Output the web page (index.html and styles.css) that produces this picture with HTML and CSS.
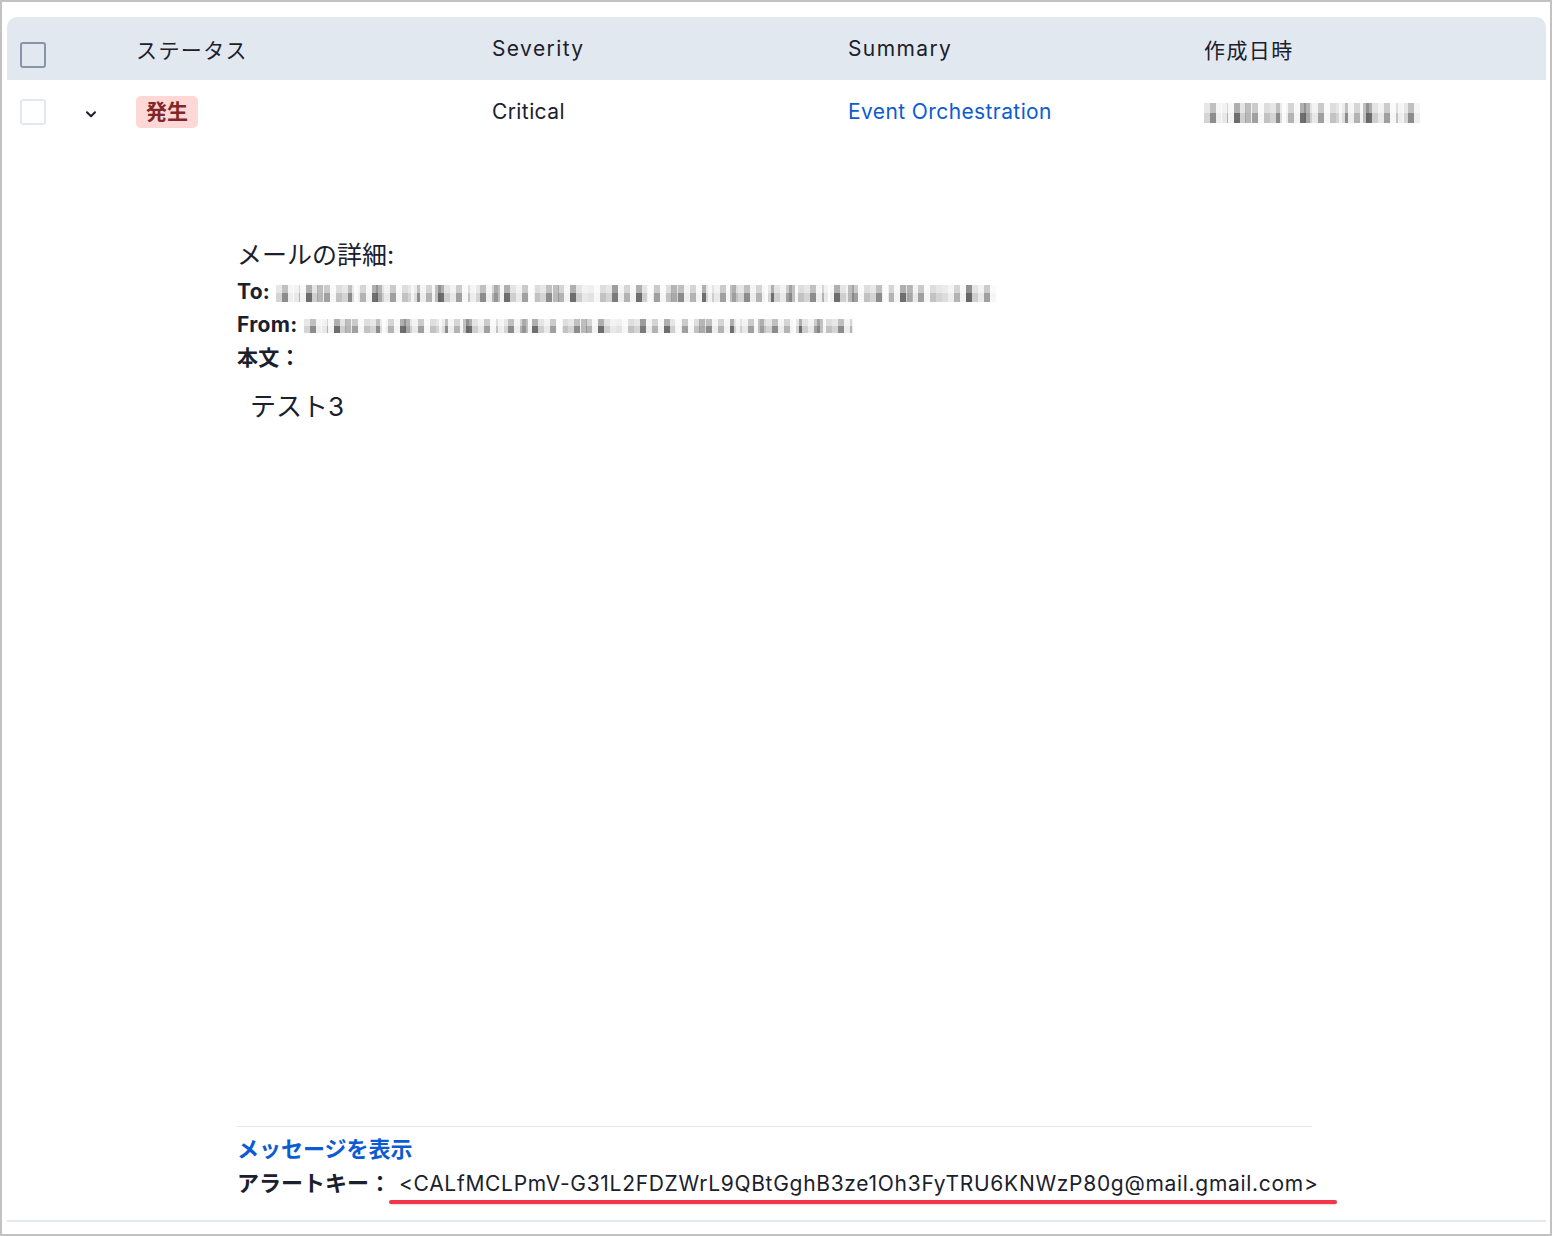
FILE: index.html
```html
<!DOCTYPE html>
<html lang="ja">
<head>
    <meta charset="UTF-8">
    <meta name="viewport" content="width=device-width, initial-scale=1.0">
    <title>アラート一覧</title>
    <link rel="stylesheet" href="styles.css">
</head>
<body>
    <div class="frame">
        <table class="alert-table">
            <colgroup>
                <col class="col-check">
                <col class="col-toggle">
                <col class="col-data">
                <col class="col-data">
                <col class="col-data">
                <col>
            </colgroup>
            <thead>
                <tr>
                    <th><span class="checkbox checkbox-head"></span></th>
                    <th></th>
                    <th>ステータス</th>
                    <th>Severity</th>
                    <th>Summary</th>
                    <th>作成日時</th>
                </tr>
            </thead>
            <tbody>
                <tr class="alert-row">
                    <td><span class="checkbox"></span></td>
                    <td>
                        <svg class="chevron" width="14" height="14" viewBox="0 0 14 14">
                            <path d="M3 5.2 L7 9.2 L11 5.2" fill="none" stroke="#1a202c" stroke-width="2" stroke-linecap="round" stroke-linejoin="round"/>
                        </svg>
                    </td>
                    <td><span class="badge">発生</span></td>
                    <td>Critical</td>
                    <td><a class="link" href="#">Event Orchestration</a></td>
                    <td><span class="mosaic mosaic-date"></span></td>
                </tr>
                <tr class="detail-row">
                    <td colspan="6">
                        <div class="detail">
                            <div class="mail">
                                <div class="mail-title">メールの詳細:</div>
                                <div class="mail-line"><b>To:</b> <span class="mosaic mosaic-to"></span></div>
                                <div class="mail-line"><b>From:</b> <span class="mosaic mosaic-from"></span></div>
                                <div class="mail-line"><b>本文：</b></div>
                                <div class="mail-body">テスト3</div>
                            </div>
                            <div class="detail-footer">
                                <a class="link link-bold" href="#">メッセージを表示</a>
                                <div class="alert-key">
                                    <b>アラートキー：</b>
                                    <span class="key-value">&lt;CALfMCLPmV-G31L2FDZWrL9QBtGghB3ze1Oh3FyTRU6KNWzP80g@mail.gmail.com&gt;</span>
                                </div>
                            </div>
                        </div>
                    </td>
                </tr>
            </tbody>
        </table>
    </div>
</body>
</html>
```

FILE: styles.css
```css
html, body {
    margin: 0;
    height: 100%;
    background-color: #ffffff;
    font-family: Inter, "Noto Sans CJK JP", sans-serif;
    color: #1a202c;
}
.frame {
    box-sizing: border-box;
    height: 1236px;
    border: 2px solid #c2c2c2;
    padding: 15px 0 0 5px;
    overflow: hidden;
}
.alert-table {
    width: 1539px;
    border-collapse: separate;
    border-spacing: 0;
    table-layout: fixed;
}
.col-check { width: 63px; }
.col-toggle { width: 66px; }
.col-data { width: 356px; }
th {
    background-color: #e2e8f0;
    height: 63px;
    padding: 0;
    text-align: left;
    font-weight: 400;
    font-size: 21px;
    letter-spacing: 1.4px;
    vertical-align: middle;
}
th:first-child {
    border-top-left-radius: 10px;
    padding-left: 13px;
}
th:last-child {
    border-top-right-radius: 10px;
}
.alert-row td {
    height: 63px;
    padding: 0;
    font-size: 21px;
    letter-spacing: 0.4px;
    vertical-align: middle;
}
.alert-row td:first-child {
    padding-left: 13px;
}
.checkbox {
    display: block;
    box-sizing: border-box;
    width: 26px;
    height: 26px;
    border: 2px solid #e2e8f0;
    border-radius: 3px;
    background: #fff;
}
.checkbox-head {
    border-color: #8a94a8;
    background: transparent;
    margin-top: 12px;
}
.chevron {
    display: block;
    margin-left: 14px;
    margin-top: 4px;
}
.badge {
    display: inline-block;
    padding: 0 10px;
    height: 32px;
    line-height: 32px;
    background-color: #fed7d7;
    color: #822727;
    font-weight: 700;
    font-size: 21px;
    letter-spacing: 0;
    border-radius: 5px;
}
.link {
    color: #0b5bd3;
    text-decoration: none;
}
.link-bold {
    font-weight: 700;
    font-size: 22px;
}
.mosaic {
    display: inline-block;
    vertical-align: middle;
    background-image:
        repeating-linear-gradient(90deg, rgba(255,255,255,0) 0 17px, rgba(255,255,255,0.7) 17px 23px, rgba(255,255,255,0) 23px 41px, rgba(90,90,90,0.35) 41px 47px, rgba(255,255,255,0) 47px 59px),
        linear-gradient(180deg, rgba(255,255,255,0.45) 0 50%, rgba(255,255,255,0) 50%),
        repeating-linear-gradient(90deg, #d4d4d4 0 6px, #8c8c8c 6px 12px, #ededed 12px 18px, #b3b3b3 18px 24px, #f3f3f3 24px 30px, #6e6e6e 30px 36px, #cfcfcf 36px 42px, #e9e9e9 42px 48px, #a0a0a0 48px 54px, #f6f6f6 54px 60px, #c2c2c2 60px 66px);
}
.mosaic-date {
    width: 216px;
    height: 20px;
}
.mosaic-to {
    width: 720px;
    height: 17px;
}
.mosaic-from {
    width: 549px;
    height: 14px;
}
.detail-row td {
    padding: 0;
    border-bottom: 2px solid #e2e8f0;
}
.detail {
    box-sizing: border-box;
    height: 1077px;
    padding: 96px 230px 0 230px;
    display: flex;
    flex-direction: column;
}
.mail-title {
    font-size: 25px;
    line-height: 32px;
    margin-bottom: 4px;
}
.mail-line {
    font-size: 21px;
    letter-spacing: 0.3px;
    line-height: 33px;
}
.mail-line b {
    font-weight: 700;
}
.mail-body {
    margin-top: 16px;
    padding-left: 13px;
    font-size: 26px;
    line-height: 34px;
}
.detail-footer {
    margin-top: auto;
    margin-right: 4px;
    border-top: 1px solid #e2e8f0;
    padding: 5px 0 19px;
    display: flex;
    flex-direction: column;
    line-height: 34px;
}
.alert-key {
    font-size: 21px;
    white-space: nowrap;
}
.alert-key b {
    font-size: 22px;
}
.key-value {
    position: relative;
    margin-left: 2px;
    letter-spacing: 0.7px;
}
.key-value::after {
    content: "";
    position: absolute;
    left: -10px;
    right: -18px;
    bottom: -8px;
    height: 4px;
    border-radius: 2px;
    background-color: #f1354b;
    box-shadow: 0 1px 2px rgba(0, 0, 0, 0.15);
}
```
